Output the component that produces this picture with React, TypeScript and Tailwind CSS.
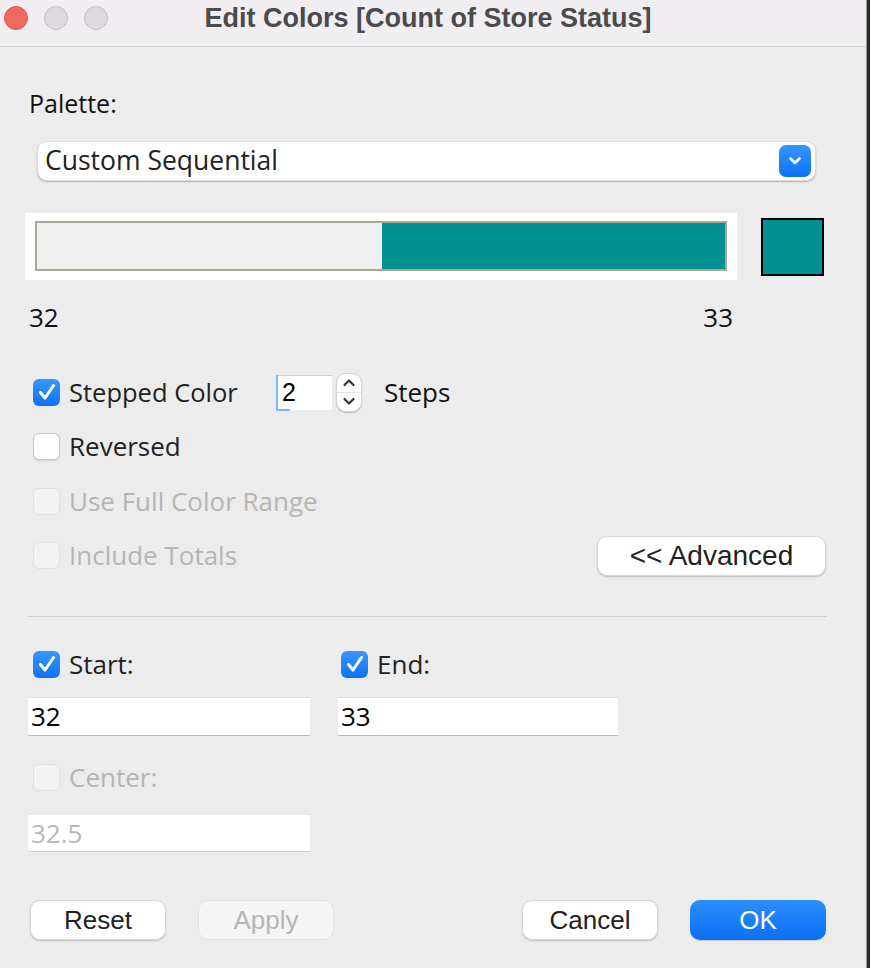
import React from 'react';

const font = { fontFamily: '"Liberation Sans", Arial, sans-serif' };
const label = { fontFamily: '"Open Sans", "Liberation Sans", sans-serif' };

function Check({ state }: { state: 'on' | 'off' | 'disabled' }) {
  if (state === 'on') {
    return (
      <div className="w-[27px] h-[27px] rounded-[6px] bg-gradient-to-b from-[#3a95ff] to-[#0a72f5] flex items-center justify-center shrink-0">
        <svg width="20" height="20" viewBox="0 0 20 20">
          <path d="M3.5 10.5 L8 16 L16.5 3.5" fill="none" stroke="white" strokeWidth="3" strokeLinecap="round" strokeLinejoin="round" />
        </svg>
      </div>
    );
  }
  if (state === 'off') {
    return <div className="w-[27px] h-[27px] rounded-[6px] bg-white border border-[#c9c9c9] shadow-[0_0.5px_1px_rgba(0,0,0,0.1)] shrink-0" />;
  }
  return <div className="w-[27px] h-[27px] rounded-[6px] bg-[#f3f3f3] border border-[#e0e0e0] shrink-0" />;
}

function Btn({ label, kind = 'normal', w = 'w-[136px]', size = 'text-[26px]' }: { label: string; kind?: 'normal' | 'disabled' | 'primary'; w?: string; size?: string }) {
  const base = `${w} h-[40px] rounded-[10px] flex items-center justify-center ${size} leading-none`;
  if (kind === 'primary') {
    return <div className={`${base} bg-gradient-to-b from-[#2a8dff] to-[#0870f6] text-white shadow-[0_1px_1px_rgba(0,0,0,0.15)]`}>{label}</div>;
  }
  if (kind === 'disabled') {
    return <div className={`${base} bg-[#f5f5f5] text-[#b5b5b5] border border-[#e2e2e2]`}>{label}</div>;
  }
  return <div className={`${base} bg-white text-[#222] border border-[#d6d6d6] shadow-[0_1px_1.5px_rgba(0,0,0,0.2)]`}>{label}</div>;
}

export default function App() {
  return (
    <div className="w-[870px] h-[968px] bg-[#2a2a2a] flex" style={font}>
      <div className="w-[867px] h-full bg-[#ececec] flex flex-col border-r border-[#a0a0a0]">
        {/* title bar */}
        <div className="h-[47px] shrink-0 bg-[#f0eef1] border-b border-[#d2d2d2] relative">
          <div className="flex items-center gap-[16px] pl-[4px] pt-[6px]">
            <div className="w-[24px] h-[24px] rounded-full bg-[#ee6a5e] border border-[#d85b50]" />
            <div className="w-[24px] h-[24px] rounded-full bg-[#dcdadd] border border-[#c2c0c3]" />
            <div className="w-[24px] h-[24px] rounded-full bg-[#dcdadd] border border-[#c2c0c3]" />
          </div>
          <div className="absolute inset-x-0 top-0 h-[37px] flex items-center justify-center">
            <span className="text-[27px] font-bold text-[#4b4a4c] ml-[-10px]">Edit Colors [Count of Store Status]</span>
          </div>
        </div>

        <div className="flex flex-col pl-[25px]" style={label}>
          <div className="mt-[37px] h-[40px] flex items-center pl-[4px] text-[25px] text-[#111]">Palette:</div>

          <div className="mt-[17px] ml-[12px] w-[779px] h-[40px] bg-white rounded-[10px] border border-[#dcdcdc] shadow-[0_1px_1.5px_rgba(0,0,0,0.25)] flex items-center justify-between pl-[7px] pr-[4px]">
            <span className="text-[26.5px] text-[#222]">Custom Sequential</span>
            <div className="w-[32px] h-[32px] rounded-[7px] bg-gradient-to-b from-[#3596ff] to-[#0a71f5] flex items-center justify-center">
              <svg width="16" height="12" viewBox="0 0 16 12">
                <path d="M3.5 3.5 L8 8 L12.5 3.5" fill="none" stroke="white" strokeWidth="2.6" strokeLinecap="round" strokeLinejoin="round" />
              </svg>
            </div>
          </div>

          <div className="mt-[32px] flex items-start">
            <div className="w-[712px] h-[67px] bg-white pl-[10px] pt-[8px]">
              <div className="w-[692px] h-[50px] border-2 border-[#a9a797] flex">
                <div className="w-[345px] h-full bg-[#f0f0f0]" />
                <div className="flex-1 h-full bg-[#009190]" />
              </div>
            </div>
            <div className="ml-[24px] mt-[5px] w-[63px] h-[58px] border-2 border-black bg-[#009190]" />
          </div>

          <div className="mt-[20px] h-[34px] w-[708px] flex items-center justify-between pl-[4px] text-[26px] text-[#111]">
            <span>32</span>
            <span>33</span>
          </div>

          <div className="mt-[38px] h-[40px] flex items-center pl-[8px]">
            <Check state="on" />
            <span className="ml-[9px] text-[25.5px] text-[#222] w-[207px]">Stepped Color</span>
            <div className="relative w-[56px] h-[35px] bg-white border-t border-l border-[#cfcfcf] flex items-center pl-[5px] text-[25px] text-black" style={font}>
              <div className="absolute left-[-1px] top-[-1px] w-[1.5px] h-[36px] bg-[#7fb2ff]" />
              <div className="absolute left-[-1px] bottom-[-1px] w-[14px] h-[1.5px] bg-[#7fb2ff]" />
              2
            </div>
            <div className="ml-[4px] w-[26px] h-[39px] rounded-[10px] bg-white border border-[#d4d4d4] shadow-[0_1px_1px_rgba(0,0,0,0.2)] flex flex-col">
              <div className="flex-1 flex items-center justify-center border-b border-[#e2e2e2]">
                <svg width="14" height="9" viewBox="0 0 14 9"><path d="M2.5 7 L7 2.5 L11.5 7" fill="none" stroke="#333" strokeWidth="2.2" strokeLinecap="round" strokeLinejoin="round" /></svg>
              </div>
              <div className="flex-1 flex items-center justify-center">
                <svg width="14" height="9" viewBox="0 0 14 9"><path d="M2.5 2 L7 6.5 L11.5 2" fill="none" stroke="#333" strokeWidth="2.2" strokeLinecap="round" strokeLinejoin="round" /></svg>
              </div>
            </div>
            <span className="ml-[22px] text-[26px] text-[#111]">Steps</span>
          </div>

          <div className="mt-[14px] h-[40px] flex items-center pl-[8px]">
            <Check state="off" />
            <span className="ml-[9px] text-[26px] text-[#222]">Reversed</span>
          </div>

          <div className="mt-[15px] h-[40px] flex items-center pl-[8px]">
            <Check state="disabled" />
            <span className="ml-[9px] text-[26px] text-[#b5b5b5]">Use Full Color Range</span>
          </div>

          <div className="mt-[14px] h-[41px] flex items-center pl-[8px] pr-[40px] justify-between">
            <div className="flex items-center">
              <Check state="disabled" />
              <span className="ml-[9px] text-[26px] text-[#b5b5b5]">Include Totals</span>
            </div>
            <div style={font}><Btn label="<< Advanced" w="w-[229px]" size="text-[28px]" /></div>
          </div>

          <div className="mt-[40px] ml-[3px] w-[799px] h-px bg-[#cfcfcf]" />

          <div className="mt-[27px] h-[40px] flex items-center pl-[8px]">
            <div className="w-[308px] flex items-center">
              <Check state="on" />
              <span className="ml-[9px] text-[26px] text-[#222]">Start:</span>
            </div>
            <Check state="on" />
            <span className="ml-[9px] text-[26px] text-[#222]">End:</span>
          </div>

          <div className="mt-[13px] ml-[3px] flex gap-[28px]">
            <div className="w-[282px] h-[39px] bg-white border-b border-[#b9b9b9] border-t border-t-[#dedede] flex items-center pl-[3px] text-[26px] text-black">32</div>
            <div className="w-[280px] h-[39px] bg-white border-b border-[#b9b9b9] border-t border-t-[#dedede] flex items-center pl-[3px] text-[26px] text-black">33</div>
          </div>

          <div className="mt-[21px] h-[40px] flex items-center pl-[8px]">
            <Check state="disabled" />
            <span className="ml-[9px] text-[26px] text-[#b5b5b5]">Center:</span>
          </div>

          <div className="mt-[17px] ml-[3px] w-[282px] h-[38px] bg-white border-b border-[#cfcfcf] border-t border-t-[#e8e8e8] flex items-center pl-[3px] text-[26px] text-[#b8b8b8]">32.5</div>

          <div className="mt-[48px] ml-[5px] w-[796px] flex items-center" style={font}>
            <Btn label="Reset" />
            <div className="ml-[32px]"><Btn label="Apply" kind="disabled" /></div>
            <div className="ml-auto"><Btn label="Cancel" /></div>
            <div className="ml-[32px]"><Btn label="OK" kind="primary" /></div>
          </div>
        </div>
      </div>
    </div>
  );
}
